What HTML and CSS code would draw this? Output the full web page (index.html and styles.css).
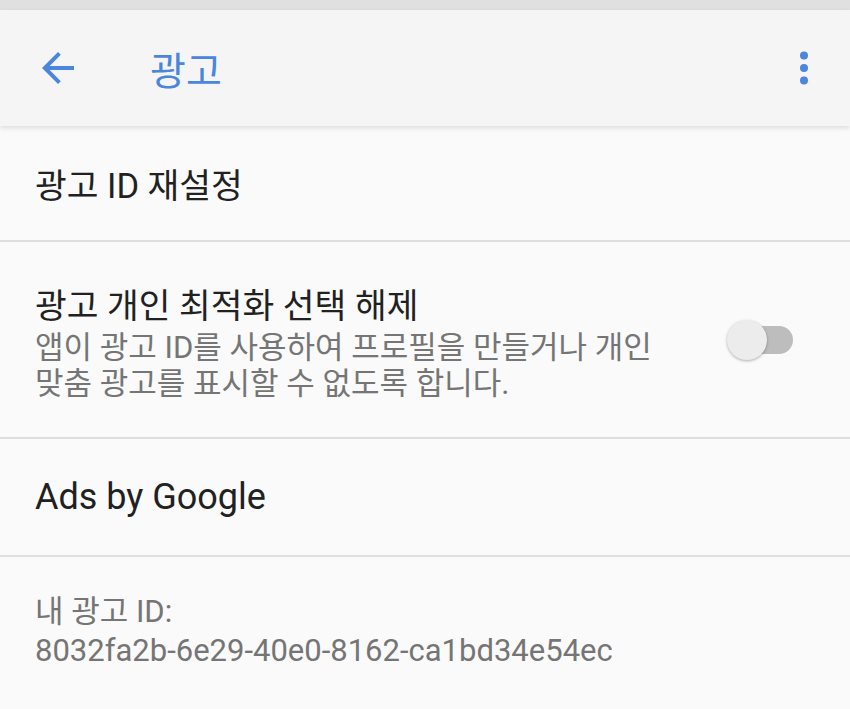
FILE: index.html
```html
<!DOCTYPE html>
<html lang="ko">
<head>
    <meta charset="utf-8">
    <title>광고</title>
    <link rel="stylesheet" href="styles.css">
</head>
<body>
    <div class="status"></div>

    <header class="toolbar">
        <button class="icon-btn back" aria-label="뒤로">
            <svg width="48" height="48" viewBox="0 0 24 24">
                <path d="M20 11H7.83l5.59-5.59L12 4l-8 8 8 8 1.41-1.41L7.83 13H20v-2z" fill="#4a85e0"/>
            </svg>
        </button>
        <h1 class="title">광고</h1>
        <button class="icon-btn more" aria-label="더보기">
            <svg width="48" height="48" viewBox="0 0 24 24" fill="#4a85e0">
                <circle cx="12" cy="5.8" r="2"/>
                <circle cx="12" cy="12" r="2"/>
                <circle cx="12" cy="18.2" r="2"/>
            </svg>
        </button>
    </header>

    <main class="list">
        <div class="row row-single">
            <span class="primary ko">광고 ID 재설정</span>
        </div>

        <div class="row row-switch">
            <div class="texts">
                <span class="primary ko">광고 개인 최적화 선택 해제</span>
                <p class="secondary">앱이 광고 ID를 사용하여 프로필을 만들거나 개인 맞춤 광고를 표시할 수 없도록 합니다.</p>
            </div>
            <div class="switch">
                <span class="track"></span>
                <span class="thumb"></span>
            </div>
        </div>

        <div class="row row-single">
            <span class="primary">Ads by Google</span>
        </div>

        <div class="row row-info">
            <p class="secondary">내 광고 ID:<br>8032fa2b-6e29-40e0-8162-ca1bd34e54ec</p>
        </div>
    </main>
</body>
</html>
```

FILE: styles.css
```css
/* Page base */
body {
    margin: 0;
    background-color: #fafafa;
    font-family: Roboto, "Noto Sans CJK KR", sans-serif;
    height: 709px;
    overflow: hidden;
}

/* Thin status strip at the very top */
.status {
    height: 10px;
    background-color: #e0e0e0;
}

/* App bar */
.toolbar {
    position: relative;
    z-index: 1;
    height: 116px;
    background-color: #f5f5f5;
    box-shadow: 0 2px 5px rgba(0, 0, 0, 0.12);
    display: flex;
    align-items: center;
}

.icon-btn {
    border: none;
    background: none;
    padding: 0;
    width: 48px;
    height: 48px;
}

.icon-btn svg {
    display: block;
}

.back {
    margin-left: 34px;
}

.title {
    margin: 0 0 0 68px;
    font-size: 39px;
    font-weight: 400;
    color: #4a85e0;
    flex: 1;
}

.more {
    margin-right: 22px;
}

/* List rows */
.row {
    border-bottom: 2px solid #dedede;
    padding: 0 35px;
}

.row-single {
    height: 114px;
    display: flex;
    align-items: center;
}

.row-single + .row-switch + .row-single {
    height: 116px;
}

.primary {
    font-size: 36px;
    color: #212121;
}

/* hangul runs a little narrower than the latin rows */
.primary.ko {
    font-size: 34.5px;
}

.secondary {
    margin: 0;
    font-size: 31px;
    line-height: 39px;
    color: #757575;
}

.row-switch {
    height: 195px;
    display: flex;
    align-items: center;
}

.row-switch .texts {
    width: 630px;
}

.row-switch .primary {
    display: block;
    margin-bottom: 2px;
}

.row-switch .secondary {
    line-height: 36px;
}

/* Switch (off state) */
.switch {
    position: relative;
    width: 66px;
    height: 40px;
    margin-left: auto;
    margin-right: 22px;
}

.track {
    position: absolute;
    left: 14px;
    top: 6px;
    width: 52px;
    height: 28px;
    border-radius: 14px;
    background-color: #bdbdbd;
}

.thumb {
    position: absolute;
    left: 0;
    top: 0;
    width: 40px;
    height: 40px;
    border-radius: 50%;
    background-color: #ececec;
    box-shadow: 0 1px 3px rgba(0, 0, 0, 0.3);
}

.row-info {
    border-bottom: none;
    padding-top: 35px;
}
```
